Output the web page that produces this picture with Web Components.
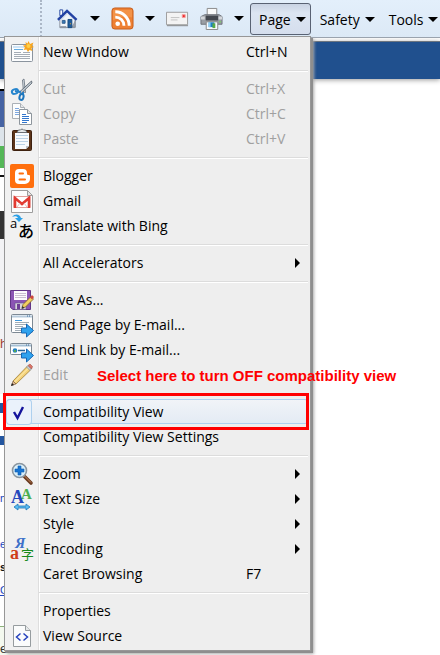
<!DOCTYPE html>
<html lang="en">
<head>
<meta charset="utf-8">
<meta name="viewport" content="width=device-width, initial-scale=1">
<title>Page menu</title>
<style>
  html, body { height: 100%; }
  body {
    margin: 0;
    overflow: hidden;
    background: #fff;
    color: #000;
    font: 14px/25px "Open Sans", "Noto Sans", sans-serif;
  }
</style>
</head>
<body>
<browser-window>
  <command-bar slot="bar">
    <bar-button icon="home" label="Home" menu></bar-button>
    <bar-button icon="feed" label="Feeds" menu></bar-button>
    <bar-button icon="mail" label="Read mail"></bar-button>
    <bar-button icon="print" label="Print" menu></bar-button>
    <bar-button slot="menus" menu open>Page</bar-button>
    <bar-button slot="menus" menu>Safety</bar-button>
    <bar-button slot="menus" menu>Tools</bar-button>
  </command-bar>

  <site-page></site-page>

  <page-menu slot="menu">
    <menu-item icon="window" shortcut="Ctrl+N">New Window</menu-item>
    <menu-line></menu-line>
    <menu-item icon="cut" shortcut="Ctrl+X" disabled>Cut</menu-item>
    <menu-item icon="copy" shortcut="Ctrl+C" disabled>Copy</menu-item>
    <menu-item icon="paste" shortcut="Ctrl+V" disabled>Paste</menu-item>
    <menu-line></menu-line>
    <menu-item icon="blogger">Blogger</menu-item>
    <menu-item icon="gmail">Gmail</menu-item>
    <menu-item icon="translate">Translate with Bing</menu-item>
    <menu-line></menu-line>
    <menu-item submenu>All Accelerators</menu-item>
    <menu-line></menu-line>
    <menu-item icon="save">Save As...</menu-item>
    <menu-item icon="sendpage">Send Page by E-mail...</menu-item>
    <menu-item icon="sendlink">Send Link by E-mail...</menu-item>
    <menu-item icon="edit" disabled>Edit</menu-item>
    <menu-line></menu-line>
    <call-out note="Select here to turn OFF compatibility view">
      <menu-item icon="check" checked>Compatibility View</menu-item>
    </call-out>
    <menu-item>Compatibility View Settings</menu-item>
    <menu-line></menu-line>
    <menu-item icon="zoom" submenu>Zoom</menu-item>
    <menu-item icon="textsize" submenu>Text Size</menu-item>
    <menu-item submenu>Style</menu-item>
    <menu-item icon="encoding" submenu>Encoding</menu-item>
    <menu-item shortcut="F7">Caret Browsing</menu-item>
    <menu-line></menu-line>
    <menu-item>Properties</menu-item>
    <menu-item icon="source">View Source</menu-item>
  </page-menu>
</browser-window>

<script>
// Every icon is drawn on a 24 x 24 grid
const sendArrow = `<path d="M11.500 15h5v-4l7 6.500-7 6.500v-4h-5z" fill="#2fa2ee" stroke="#1767b4"/>`;

const ICONS = {
  home: `
    <path d="M4 3h3v6H4z" fill="#fff" stroke="#2445a0"/>
    <path d="M4 13l8-8 8 8v8.500H4z" fill="#f1f4f8" stroke="#8b93a0"/>
    <path d="M4.500 20.500h6v1h-6zM16 21h4v-7" fill="#9aa2ad" stroke="#8b93a0"/>
    <path d="M2 13.500L11.500 4l10 9.500" fill="none" stroke="#2342a4" stroke-width="2.500"/>
    <path d="M5 14L12 7l6 6" fill="none" stroke="#c8d6f0"/>
    <path d="M12.500 13h4v8.500h-4z" fill="#1e5c9c" stroke="#174a80"/>
    <path d="M6.500 14h3v3h-3z" fill="#347ab8" stroke="#355f8d"/>
    <path d="M14.500 17h1v1h-1z" fill="#f5a623"/>`,
  feed: `
    <rect x="1" y="1" width="22" height="22" rx="3" fill="#ee8032" stroke="#c65d1c"/>
    <path d="M2 3h20v8Q12 8 2 14z" fill="#f6a057" opacity=".6"/>
    <circle cx="7" cy="17.500" r="2.400" fill="#fff"/>
    <path d="M4.500 10.500a9 9 0 0 1 9 9M4.500 5A14.500 14.500 0 0 1 19 19.500" fill="none" stroke="#fff" stroke-width="3"/>`,
  mail: `
    <path d="M.5 5.500h22v13H.5z" fill="#f3f3f3" stroke="#9b9b9b"/>
    <path d="M1 19.500h22" stroke="#858585"/>
    <path d="M5 11h9M5 13.500h7" stroke="#c2c2c2"/>
    <path d="M17 8h3v3h-3z" fill="#ee2a2a" stroke="#f59a9a"/>`,
  print: `
    <path d="M7.500 1.500h10v8h-10z" fill="#fafafa" stroke="#888"/>
    <path d="M5 8h15l3 2v8H1v-8z" fill="#9a9ea4" stroke="#70747b"/>
    <path d="M1 10h4v3H1zM19 10h4v3h-4z" fill="#d3d6da"/>
    <path d="M6 9h13v5H6z" fill="#44484f"/>
    <path d="M20 15h2v1h-2z" fill="#6fe04e"/>
    <path d="M6.500 15.500h12v8h-12z" fill="#f8fbff" stroke="#888"/>
    <path d="M9 16h6v5H9z" fill="#1e7fc4"/><path d="M13 17h3v5h-3z" fill="#56a948"/>
    <path d="M9 16h2v5H9z" fill="#8fd0f3"/>`,
  window: `
    <rect x="1.500" y="4.500" width="21" height="17" rx="1" fill="#fcfdfe" stroke="#8b949e"/>
    <path d="M3 6h18v2H3z" fill="#cfe4f6"/>
    <path d="M4 9.500h9" stroke="#62ace2"/>
    <path d="M4 12.500h7M13 12.500h7M4 14.500h16M4 16.500h16M4 18.500h16" stroke="#a4acb6"/>
    <path d="M18.500 1l1.500 3 3.500-1.500-1.500 3.500 2 1-2.500 1 1 3-3-1-1.500 2-1.500-2.500-3 .5 1.500-2.500-2-2 3-.5-.5-3 2 1.500z" fill="#f7a520"/>
    <circle cx="18.500" cy="6" r="2" fill="#ffcf45"/>`,
  cut: `
    <path d="M14 2l-1.500 1 1 12 2 .5z" fill="#dce2e8" stroke="#626d7a" stroke-width=".8"/>
    <path d="M21.500 4l-12 11 1 2L22 6z" fill="#c5ced6" stroke="#4e5965" stroke-width=".8"/>
    <path d="M11 15L5 14M13 15v3" stroke="#2880c8" stroke-width="2"/>
    <ellipse cx="5" cy="14.500" rx="3.200" ry="2.200" transform="rotate(-20 5 14.500)" fill="none" stroke="#2786ce" stroke-width="2"/>
    <ellipse cx="11.500" cy="20" rx="2" ry="3" transform="rotate(15 11.500 20)" fill="none" stroke="#1d76bd" stroke-width="2"/>`,
  copy: `
    <path d="M2.500 1.500h8l4 4v11h-12z" fill="#fcfdfd" stroke="#aab0b6"/>
    <path d="M10.500 1.500v4h4" fill="#e5e8ea" stroke="#aab0b6"/>
    <path d="M5 6.500h4M5 8.500h5M5 10.500h4M5 12.500h4" stroke="#7fa8df"/>
    <path d="M9.500 7.500h8l4 4v11h-12z" fill="#fff" stroke="#8e969d"/>
    <path d="M17.500 7.500v4h4" fill="#e1e4e7" stroke="#8e969d"/>
    <path d="M12 12.500h4M12 14.500h7M12 16.500h7M12 18.500h7M12 20.500h5" stroke="#3276cd"/>`,
  paste: `
    <rect x="2.500" y="3.500" width="19" height="20" rx="1" fill="#5d351a" stroke="#3e210f"/>
    <path d="M5 6h14v13l-3 3H5z" fill="#f9fbfd"/>
    <path d="M6 8.500h12M6 11.500h12M6 14.500h12M6 17.500h9" stroke="#bdd3e5"/>
    <path d="M19 19h-3v3z" fill="#bdc5cb"/>
    <path d="M7 5.500l1.500-2.500h2a1.700 1.700 0 0 1 3 0h2L17 5.500z" fill="#e6e8e9" stroke="#6b7075"/>`,
  blogger: `
    <rect width="24" height="24" rx="2" fill="#ff6f0e"/>
    <path d="M9 5h4a4 4 0 0 1 4 4c0 2 .5 2 2 2q1 0 1 1v3a5 5 0 0 1-5 5H9a4 4 0 0 1-4-4V9a4 4 0 0 1 4-4z" fill="#fff"/>
    <path d="M9.500 9.500h3.500M9.500 15.500h5.500" stroke="#ff6f0e" stroke-width="2" stroke-linecap="round"/>`,
  gmail: `
    <path d="M1.500 1.500h16l5 5v17h-21z" fill="#fdfdfd" stroke="#9d9d9d"/>
    <path d="M17.500 1.500v5h5z" fill="#e6e6e6" stroke="#9d9d9d"/>
    <path d="M4 7.500h16v11H4z" fill="#fff" stroke="#e2a09c"/>
    <path d="M5 19V9l7 6 7-6v10" fill="none" stroke="#e23a31" stroke-width="2.600"/>
    <path d="M7 18l3-4M17 18l-3-4" stroke="#e9bcb8"/>`,
  translate: `
    <text x="0" y="14" font-family="Open Sans, sans-serif" font-size="13">a</text>
    <text x="8" y="23" font-family="Noto Sans CJK JP, sans-serif" font-size="16" font-weight="500">あ</text>
    <path d="M2 3c3-4 8-3 9 1h2l-4 4-4-4h3c-1-2-3-2-6-1z" fill="#2ba0e7"/>`,
  save: `
    <path d="M.5 2.500h20v19H3l-2.500-2z" fill="#8b55b4" stroke="#623687"/>
    <path d="M4 3h13v9H4z" fill="#fbfafc"/>
    <path d="M5 5.500h11M5 7.500h11M5 9.500h11" stroke="#c9bfd0"/>
    <path d="M5 15h11v6.500H5z" fill="#d7d4db" stroke="#67518a" stroke-width=".6"/>
    <path d="M7 16h3v5H7z" fill="#6e3f95"/>
    <path d="M12 20l1-3.500 8-8 2.500 2.500-8 8z" fill="#f2d062" stroke="#806526" stroke-width=".8"/>
    <path d="M20 9.500L22 7l2 2-2 2.500z" fill="#cf463f"/>
    <path d="M11.500 21l1-3 2 2z" fill="#333"/>`,
  sendpage: `
    <rect x="1.500" y="1.500" width="21" height="18" rx="1" fill="#fff" stroke="#7d8994"/>
    <path d="M2 3.500h20" stroke="#b7cbdc" stroke-width="2"/>
    <path d="M17 3h1M19 3h1" stroke="#386b99"/>
    <path d="M5 7.500h7" stroke="#3c97db"/>
    <path d="M5 9.500h14M5 11.500h12M5 13.500h8M5 15.500h6M5 17.500h6" stroke="#a2adb6"/>
    ${sendArrow}`,
  sendlink: `
    <rect x=".5" y="5.500" width="21" height="11" rx="1" fill="#fff" stroke="#7d8994"/>
    <path d="M1 7.500h20" stroke="#a6c0d5" stroke-width="2"/>
    <path d="M16 7h1M18 7h1" stroke="#386b99"/>
    <circle cx="5" cy="12.500" r="2.300" fill="#2381c5"/><path d="M4 12h2v2H4z" fill="#55a853"/>
    <path d="M8 12.500h7" stroke="#26659a" stroke-width="1.500"/>
    ${sendArrow}`,
  edit: `
    <path d="M3 18L17 3.500l3.500 3.500L6 21z" fill="#f4d279" stroke="#9e7c36" stroke-width=".8"/>
    <path d="M4.500 19L18.500 5" stroke="#fff0b8"/>
    <path d="M16.500 4L20 7.500l1.500-1.500L18 2.500z" fill="#c8d0d5" stroke="#7e8589" stroke-width=".6"/>
    <path d="M18 2.500l2-1.500 2.500 2.500L21.500 6z" fill="#db7468" stroke="#a35045" stroke-width=".6"/>
    <path d="M1.500 22.500L3 18l3 3z" fill="#dcb891" stroke="#765434" stroke-width=".6"/>
    <path d="M1 23l1-3 2 2z" fill="#222"/>`,
  check: `<path d="M7 12l3.500 6L16 7" fill="none" stroke="#14149c" stroke-width="2.400"/>`,
  zoom: `
    <path d="M14.500 14.500L21 21" stroke="#6b3b20" stroke-width="3.600" stroke-linecap="round"/>
    <path d="M14.500 14L21 20.500" stroke="#c58a5f"/>
    <circle cx="9.500" cy="8.500" r="7" fill="#d6eefb" stroke="#8b969f" stroke-width="1.600"/>
    <path d="M8 4h3v3h3v3h-3v3H8v-3H5V7h3z" fill="#1674d2" stroke="#0e5aae" stroke-width=".6"/>`,
  textsize: `
    <text x="11" y="12" font-family="Liberation Serif, serif" font-weight="700" font-size="15" fill="#4caf50">A</text>
    <text x="1" y="16" font-family="Liberation Serif, serif" font-weight="700" font-size="18" fill="#2548bd">A</text>
    <path d="M4 20l4-3v2h8v-2l4 3-4 3v-2H8v2z" fill="#5bbcf1" stroke="#1d76ba" stroke-width=".8"/>`,
  encoding: `
    <text x="5" y="11" font-family="Liberation Serif, serif" font-weight="700" font-style="italic" font-size="15" fill="#3e71c9">Я</text>
    <text x="0" y="22" font-family="Liberation Serif, serif" font-weight="700" font-size="18" fill="#ce3d19">a</text>
    <text x="11" y="22" font-family="Noto Sans CJK SC, sans-serif" font-size="13" fill="#188a1c">字</text>`,
  source: `
    <path d="M3.500 1.500h12l5 5v16h-17z" fill="#fbfcfc" stroke="#969c9f"/>
    <path d="M15.500 1.500v5h5" fill="#e5e8e9" stroke="#969c9f"/>
    <path d="M10.500 9.500L6.500 13l4 3.500M13.500 9.500l4 3.500-4 3.500" fill="none" stroke="#2743bd" stroke-width="1.500"/>`
};

function icon(name) {
  return ICONS[name] ? `<svg viewBox="0 0 24 24" aria-hidden="true">${ICONS[name]}</svg>` : "";
}

class BrowserWindow extends HTMLElement {
  constructor() {
    super();
    this.attachShadow({ mode: "open" }).innerHTML = `
      <style>
        :host { display: flex; flex-direction: column; position: relative; height: 100%; overflow: hidden; }
        ::slotted(site-page) { flex: 1; min-height: 0; }
        ::slotted(page-menu) { position: absolute; top: 36px; left: 4px; }
      </style>
      <slot name="bar"></slot>
      <slot></slot>
      <slot name="menu"></slot>
    `;
  }
}

class CommandBar extends HTMLElement {
  constructor() {
    super();
    this.attachShadow({ mode: "open" }).innerHTML = `
      <style>
        :host {
          display: flex;
          flex: none;
          box-sizing: border-box;
          height: 38px;
          padding: 3px 0 2px 40px;
          background: linear-gradient(#e3effb, #dce9f6);
          border-bottom: 1px solid #9aa3ae;
          white-space: nowrap;
        }
        .tools {
          display: flex;
          gap: 11px;
          padding: 0 6px 0 14px;
          margin: -3px 0 -2px;
          border-left: 2px dotted #abb7c7;
        }
        .menus { display: flex; }
      </style>
      <div class="tools"><slot></slot></div>
      <div class="menus"><slot name="menus"></slot></div>
    `;
  }
}

class BarButton extends HTMLElement {
  connectedCallback() {
    const name = this.getAttribute("icon");
    const label = this.getAttribute("label");
    this.attachShadow({ mode: "open" }).innerHTML = `
      <style>
        :host { display: flex; flex: none; }
        button {
          display: flex;
          align-items: center;
          gap: 5px;
          padding: 0 4px 0 8px;
          border: 1px solid transparent;
          border-radius: 3px;
          background: none;
          color: inherit;
          font: inherit;
        }
        button.tool { gap: 11px; padding: 0; border: 0; }
        :host([open]) button {
          border-color: #596273;
          background: linear-gradient(#c9d3e3, #dce5f2 30%, #d5deed);
        }
        svg { width: 23px; height: 23px; }
        .arrow {
          border: 5px solid transparent;
          border-top-color: #000;
          border-bottom: 0;
        }
      </style>
      <button type="button" ${name ? `class="tool" aria-label="${label}"` : ""}>
        ${icon(name)}<slot></slot>
        ${this.hasAttribute("menu") ? `<span class="arrow"></span>` : ""}
      </button>
    `;
  }
}

// The web page that the menu hangs over
class SitePage extends HTMLElement {
  constructor() {
    super();
    this.attachShadow({ mode: "open" }).innerHTML = `
      <style>
        :host {
          display: flex;
          flex-direction: column;
          overflow: hidden;
          background: #fff;
          font: 13px/16px "Liberation Sans", Arial, sans-serif;
          white-space: nowrap;
        }
        :host > * { flex: none; }
        header {
          height: 37px;
          margin-top: 3px;
          border-top: 1px solid #6c7580;
          background: #20508e;
          box-shadow: 0 1px 5px #999;
        }
        .side { width: 200px; }
        .logo { height: 36px; margin-top: 10px; background: #4663a3; border-top: 2px solid #000; }
        .pale { height: 19px; background: #dde4ea; }
        .green { height: 22px; width: 16px; border-radius: 0 8px 8px 0; background: #55b757; }
        .rule { height: 2px; margin-top: 7px; background: #111; }
        .dark { height: 28px; margin-top: 34px; background: #333; border-radius: 0 20px 0 0; }
        .grey { height: 155px; background: #f3f3f5; padding-top: 97px; box-sizing: border-box; color: #a04030; }
        .band { height: 10px; margin: 9px 0 23px; background: #2456a0; }
        .band + .band { height: 9px; margin: 0; }
        .links { padding-top: 42px; color: #2146c0; line-height: 23px; font-size: 11px; }
        .links b { color: #111; }
        a { color: inherit; }
        .box { border-top: 1px solid #8db27c; background: #f4f9ef; padding-top: 14px; margin-top: 24px; height: 40px; color: #333; }
      </style>
      <header></header>
      <div class="side logo"></div>
      <div class="side pale"></div>
      <div class="green"></div>
      <div class="side rule"></div>
      <div class="side dark"></div>
      <div class="side grey">h</div>
      <div class="side band"></div>
      <div class="side band"></div>
      <div class="side links">m<br><br>er<br><b>s</b><br><a href="#">C</a></div>
      <div class="side box">ere in our new social</div>
    `;
  }
}

class PageMenu extends HTMLElement {
  constructor() {
    super();
    this.attachShadow({ mode: "open" }).innerHTML = `
      <style>
        :host {
          display: flex;
          flex-direction: column;
          min-width: 301px;
          padding: 2px;
          border: 1px solid #979797;
          background: linear-gradient(90deg, #f1f1f1 33px, #dedede 33px 34px, #fff 34px 35px, #eee 35px);
          box-shadow: 2px 2px 0 #8e8e8e, 3px 3px 3px #aaa;
        }
      </style>
      <slot></slot>
    `;
  }

  connectedCallback() {
    this.setAttribute("role", "menu");
  }
}

class MenuLine extends HTMLElement {
  constructor() {
    super();
    this.attachShadow({ mode: "open" }).innerHTML = `
      <style>
        :host { display: block; padding: 6px 0 4px 32px; }
        div { height: 1px; background: #dcdcdc; border-bottom: 1px solid #fff; }
      </style>
      <div></div>
    `;
  }
}

class MenuItem extends HTMLElement {
  connectedCallback() {
    const shortcut = this.getAttribute("shortcut") || "";
    const disabled = this.hasAttribute("disabled") ? "disabled" : "";
    const role = this.hasAttribute("checked") ? `role="menuitemcheckbox" aria-checked="true"` : `role="menuitem"`;
    this.attachShadow({ mode: "open" }).innerHTML = `
      <style>
        :host { display: block; }
        button {
          display: grid;
          grid-template-columns: 36px 1fr 62px;
          align-items: center;
          width: 100%;
          height: 25px;
          padding: 0;
          border: 0;
          border-radius: 3px;
          background: none;
          color: inherit;
          font: inherit;
          text-align: left;
          white-space: nowrap;
        }
        button:disabled { color: #a0a0a0; }
        svg { display: block; width: 24px; height: 24px; margin-left: 3px; overflow: visible; }
        :host([checked]) button {
          background: linear-gradient(#f1f4f8, #e3ebf4);
          box-shadow: inset 0 0 0 1px #aed0ee;
        }
        :host([checked]) svg {
          margin: 0;
          border-radius: 3px;
          background: #eaf2fb;
          box-shadow: 0 0 0 1px #aed0ee;
        }
        .more {
          display: block;
          width: 0;
          margin-left: 49px;
          border: 5px solid transparent;
          border-left-color: #000;
          border-right: 0;
        }
      </style>
      <button type="button" ${role} ${disabled}>
        <span>${icon(this.getAttribute("icon"))}</span>
        <span><slot></slot></span>
        <span>${shortcut}${this.hasAttribute("submenu") ? `<span class="more"></span>` : ""}</span>
      </button>
    `;
  }
}

// Red frame round one item, with a note above it
class CallOut extends HTMLElement {
  connectedCallback() {
    this.attachShadow({ mode: "open" }).innerHTML = `
      <style>
        :host { display: block; position: relative; }
        .frame {
          position: absolute;
          inset: -6px -1px -6px -4px;
          border: 3px solid #f00;
          pointer-events: none;
        }
        .note {
          position: absolute;
          bottom: 38px;
          left: 90px;
          color: #f00;
          font: bold 15px/20px "Liberation Sans", Arial, sans-serif;
          white-space: nowrap;
        }
      </style>
      <slot></slot>
      <div class="frame"></div>
      <div class="note">${this.getAttribute("note")}</div>
    `;
  }
}

customElements.define("browser-window", BrowserWindow);
customElements.define("command-bar", CommandBar);
customElements.define("bar-button", BarButton);
customElements.define("site-page", SitePage);
customElements.define("page-menu", PageMenu);
customElements.define("menu-line", MenuLine);
customElements.define("menu-item", MenuItem);
customElements.define("call-out", CallOut);
</script>
</body>
</html>
